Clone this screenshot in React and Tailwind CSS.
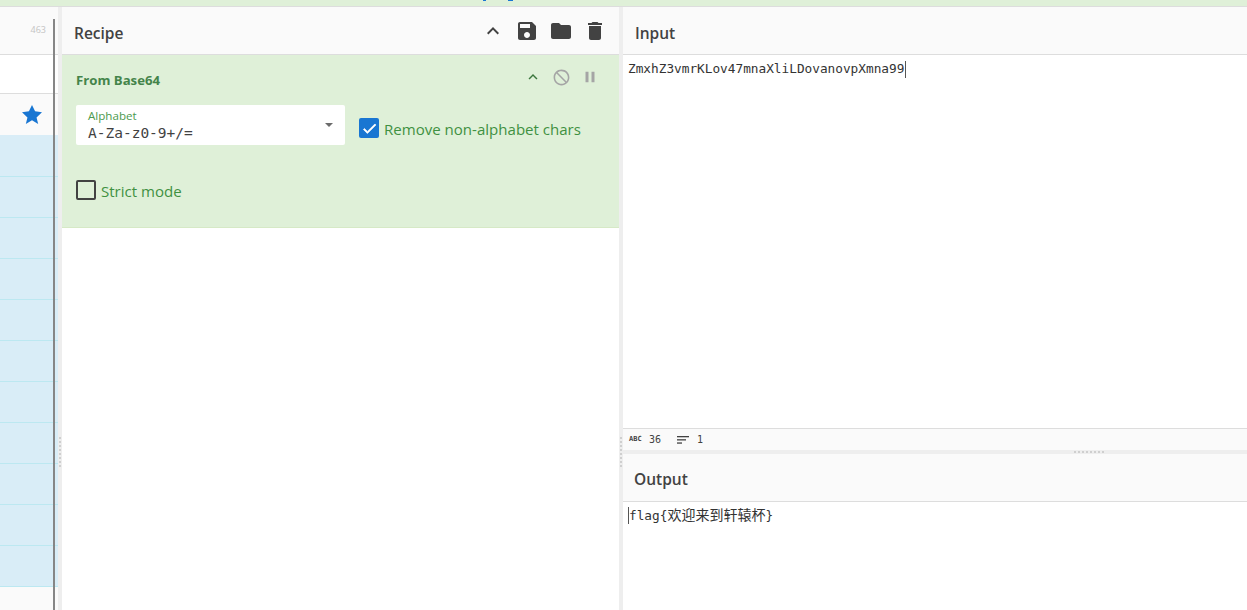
import React from 'react';

const sans = 'font-["Open_Sans","Noto_Sans",sans-serif]';
const mono = 'font-["DejaVu_Sans_Mono","Noto_Sans_CJK_SC",monospace]';

function Icon({ d, className }) {
  return (
    <svg viewBox="0 0 24 24" fill="currentColor" className={className}>
      <path d={d} />
    </svg>
  );
}

const icons = {
  up: 'M7.41 15.41L12 10.83l4.59 4.58L18 14l-6-6-6 6z',
  save: 'M17 3H5c-1.11 0-2 .9-2 2v14c0 1.1.89 2 2 2h14c1.1 0 2-.9 2-2V7l-4-4zm-5 16c-1.66 0-3-1.34-3-3s1.34-3 3-3 3 1.34 3 3-1.34 3-3 3zm3-10H5V5h10v4z',
  folder: 'M10 4H4c-1.1 0-1.99.9-1.99 2L2 18c0 1.1.9 2 2 2h16c1.1 0 2-.9 2-2V8c0-1.1-.9-2-2-2h-8l-2-2z',
  trash: 'M6 19c0 1.1.9 2 2 2h8c1.1 0 2-.9 2-2V7H6v12zM19 4h-3.5l-1-1h-5l-1 1H5v2h14V4z',
  block: 'M12 2C6.48 2 2 6.48 2 12s4.48 10 10 10 10-4.48 10-10S17.52 2 12 2zm0 18c-4.42 0-8-3.58-8-8 0-1.85.63-3.55 1.69-4.9L16.9 18.31C15.55 19.37 13.85 20 12 20zm6.31-3.1L7.1 5.69C8.45 4.63 10.15 4 12 4c4.42 0 8 3.58 8 8 0 1.85-.63 3.55-1.69 4.9z',
  pause: 'M6 19h4V5H6v14zm8-14v14h4V5h-4z',
  star: 'M12 17.27L18.18 21l-1.64-6.47L22 9.24l-6.91-.99L12 2 8.91 8.25 2 9.24l5.46 5.29L5.82 21z',
  check: 'M9 16.17L4.83 12l-1.42 1.41L9 19 21 7l-1.41-1.41z',
};

function PaneTitle({ children, textClass }) {
  return (
    <div className="h-[48px] shrink-0 flex items-center bg-[#fafafa] border-b border-[#dddddd]">
      <span className={`text-[15.5px] font-semibold text-[#424242] ${textClass}`}>{children}</span>
    </div>
  );
}

function Gutter() {
  return (
    <div className="w-[4px] shrink-0 bg-[#eeeeee] flex flex-col items-center pt-[430px] gap-[2px]">
      {[0, 1, 2, 3, 4, 5, 6, 7].map((i) => (
        <div key={i} className="w-[2px] h-[2px] bg-[#cfcfcf]" />
      ))}
    </div>
  );
}

export default function App() {
  const blueRows = [0, 1, 2, 3, 4, 5, 6, 7, 8, 9, 10];

  return (
    <div className={`w-[1247px] h-[610px] overflow-hidden flex flex-col bg-white ${sans}`}>
      {/* top banner, only the bottom edge is visible */}
      <div className="h-[7px] shrink-0 bg-[#dff0d8] border-b border-[#dddddd] flex justify-start pl-[483px]">
        <div className="flex gap-[22px]">
          <div className="w-[3px] h-[1px] bg-[#1976d2]" />
          <div className="w-[5px] h-[1px] bg-[#1976d2]" />
        </div>
      </div>

      <div className="flex-1 flex min-h-0">
        {/* operations column */}
        <div className="relative w-[58px] shrink-0 flex flex-col">
          <div className="h-[48px] shrink-0 bg-[#fafafa] border-b border-[#dddddd] flex items-center justify-end pr-[12px]">
            <span className="text-[9px] text-[#c4c4c4] -mt-[2px]">463</span>
          </div>
          <div className="h-[39px] shrink-0 bg-white border-b border-[#dddddd]" />
          <div className="h-[41px] shrink-0 bg-[#fafafa] flex items-center pl-[20px]">
            <Icon d={icons.star} className="w-[24px] h-[24px] text-[#1976d2]" />
          </div>
          {blueRows.map((i) => (
            <div key={i} className={i === 0 ? 'h-[42px] shrink-0 bg-[#d9edf7] border-b border-[#bce8f1]' : 'h-[41px] shrink-0 bg-[#d9edf7] border-b border-[#bce8f1]'} />
          ))}
          <div className="flex-1 bg-[#fafafa]" />
          {/* scrollbar line lying over the list */}
          <div className="absolute left-[53px] top-[12px] bottom-0 w-[2px] bg-[#868686]" />
        </div>

        <Gutter />

        {/* recipe */}
        <div className="w-[557px] shrink-0 flex flex-col">
          <div className="h-[48px] shrink-0 flex items-center justify-between bg-[#fafafa] border-b border-[#dddddd] pl-3 pr-[12px]">
            <span className="mt-[6px] text-[15.5px] font-semibold text-[#424242]">Recipe</span>
            <div className="flex items-center gap-[10px] text-[#424242]">
              <Icon d={icons.up} className="w-[24px] h-[24px]" />
              <Icon d={icons.save} className="w-[24px] h-[24px]" />
              <Icon d={icons.folder} className="w-[24px] h-[24px]" />
              <Icon d={icons.trash} className="w-[24px] h-[24px]" />
            </div>
          </div>

          <div className="h-[173px] shrink-0 bg-[#dff0d8] border-b border-[#d6e9c6] pl-[14px] pr-[20px] pt-[15px] text-[#3c763d]">
            <div className="h-[20px] flex items-center justify-between">
              <span className="mt-[2px] text-[13.2px] font-bold text-[#44844a]">From Base64</span>
              <div className="flex items-center gap-[10px] -mt-[6px]">
                <Icon d={icons.up} className="w-[18px] h-[18px]" />
                <Icon d={icons.block} className="w-[19px] h-[19px] text-[#a5a5a5]" />
                <Icon d={icons.pause} className="w-[18px] h-[18px] text-[#a5a5a5]" />
              </div>
            </div>

            <div className="flex items-start mt-[15px]">
              <div className="relative w-[269px] h-[40px] bg-white rounded-[2px] pl-[12px] pt-[4px]">
                <div className="text-[11.6px] leading-[14px] text-[#4c9a4e]">Alphabet</div>
                <div className={`mt-[1px] text-[14.5px] leading-[19px] text-[#424242] ${mono}`}>A-Za-z0-9+/=</div>
                <div className="absolute right-[12px] top-[18px] w-0 h-0 border-x-[4px] border-x-transparent border-t-[4px] border-t-[#6b6b6b]" />
              </div>
              <div className="flex items-center ml-[14px] mt-[13px] h-[20px]">
                <div className="w-[20px] h-[20px] rounded-[2px] bg-[#1976d2] flex items-center justify-center">
                  <Icon d={icons.check} className="w-[17px] h-[17px] text-white stroke-white stroke-[1px]" />
                </div>
                <span className="ml-[5px] mt-[2px] text-[15.05px] text-[#3f9142]">Remove non-alphabet chars</span>
              </div>
            </div>

            <div className="flex items-center mt-[35px] h-[20px]">
              <div className="w-[20px] h-[20px] rounded-[2px] border-2 border-[#424242]" />
              <span className="ml-[5px] mt-[2px] text-[15.05px] text-[#3f9142]">Strict mode</span>
            </div>
          </div>

          <div className="flex-1 bg-white" />
        </div>

        <Gutter />

        {/* input and output */}
        <div className="flex-1 min-w-0 flex flex-col">
          <PaneTitle textClass="ml-3 mt-[6px]">Input</PaneTitle>
          <div className="h-[373px] shrink-0 bg-white pl-[5px] pt-[5px]">
            <div className={`flex items-center text-[12.75px] leading-[18px] text-[#333333] ${mono}`}>
              <span>ZmxhZ3vmrKLov47mnaXliLDovanovpXmna99</span>
              <span className="ml-[1px] w-px h-[17px] bg-[#555555]" />
            </div>
          </div>
          <div className={`h-[22px] shrink-0 bg-[#fafafa] border-t border-[#dddddd] flex items-center pl-[6px] text-[10px] text-[#424242] ${mono}`}>
            <span className="text-[7px] font-bold w-[20px]">ABC</span>
            <span>36</span>
            <svg viewBox="0 0 12 10" className="w-[12px] h-[10px] ml-[16px]" fill="#424242">
              <rect x="0" y="1" width="12" height="1.3" />
              <rect x="0" y="4.2" width="9" height="1.3" />
              <rect x="0" y="7.4" width="5" height="1.3" />
            </svg>
            <span className="ml-[8px]">1</span>
          </div>
          <div className="h-[4px] shrink-0 bg-[#eeeeee] flex justify-start items-center pl-[451px] gap-[2px]">
            {[0, 1, 2, 3, 4, 5, 6, 7].map((i) => (
              <div key={i} className="w-[2px] h-[2px] bg-[#cfcfcf]" />
            ))}
          </div>
          <PaneTitle textClass="ml-[11px] mt-[4px]">Output</PaneTitle>
          <div className="flex-1 bg-white pl-[5px] pt-[4px]">
            <div className={`flex items-center text-[12.75px] leading-[18px] text-[#333333] ${mono}`}>
              <span className="w-px h-[17px] bg-[#555555]" />
              <span>flag{'{'}<span className="text-[14px]">欢迎来到轩辕杯</span>{'}'}</span>
            </div>
          </div>
        </div>
      </div>
    </div>
  );
}
